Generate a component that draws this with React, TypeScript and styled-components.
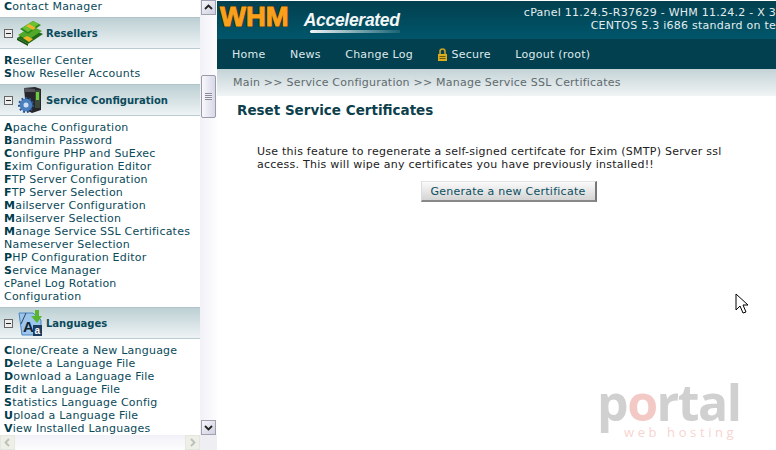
import React from "react";
import styled, { createGlobalStyle } from "styled-components";

const GlobalStyle = createGlobalStyle`
  html, body { margin: 0; padding: 0; background: #fff; overflow: hidden; }
  body { font-family: "DejaVu Sans", Verdana, sans-serif; }
`;

const Page = styled.div`
  position: relative;
  display: flex;
  width: 776px;
  height: 450px;
  overflow: hidden;
  background: #fff;
`;

const Sidebar = styled.aside`
  width: 217px;
  flex: none;
  display: grid;
  grid-template-columns: 200px 17px;
  grid-template-rows: 435px 15px;
  background: #f5f5fa;
`;

const Tree = styled.nav`
  overflow: hidden;
  background: #fff;
`;

const LinkList = styled.div<{ $top: number }>`
  padding: ${(p) => p.$top}px 0 4px 4px;
`;

const LinkItem = styled.a<{ $plain?: boolean }>`
  display: block;
  font-size: 11px;
  line-height: 13px;
  letter-spacing: 0.22px;
  color: #0b4a5a;
  white-space: pre-line;
  &::first-letter {
    font-weight: ${(p) => (p.$plain ? "normal" : "bold")};
    color: #003c4c;
  }
`;

const GroupHeader = styled.div`
  height: 30px;
  display: flex;
  align-items: center;
  border-top: 1px solid #b0c4c9;
  border-bottom: 1px solid #b9ccd1;
  background: linear-gradient(#bdd0d4, #eef3f4);
  padding-left: 4px;
`;

const Toggle = styled.span`
  width: 7px;
  height: 7px;
  border: 1px solid #666;
  background: #eee;
  display: flex;
  align-items: center;
  justify-content: center;
  flex: none;
  &::before {
    content: "";
    width: 5px;
    height: 1px;
    background: #222;
  }
`;

const GroupIcon = styled.svg`
  width: 26px;
  height: 28px;
  margin: 0 3px 0 4px;
  flex: none;
`;

const GroupTitle = styled.span`
  font-size: 10px;
  font-weight: bold;
  color: #0a4a5c;
`;

const ScrollTrack = styled.div`
  display: flex;
  flex-direction: column;
  background: linear-gradient(90deg, #f1f1f8, #fdfdfe);
`;

const HScrollTrack = styled.div`
  display: flex;
  justify-content: space-between;
  background: linear-gradient(#f1f1f8, #fdfdfe);
`;

const ScrollButton = styled.div<{ $muted?: boolean }>`
  width: 15px;
  height: 15px;
  box-sizing: border-box;
  flex: none;
  margin: 0 0 0 ${(p) => (p.$muted ? 0 : 1)}px;
  display: flex;
  align-items: center;
  justify-content: center;
  color: ${(p) => (p.$muted ? "#b8c0b8" : "#222")};
  border: 1px solid ${(p) => (p.$muted ? "#e4e6e0" : "#a0a0b0")};
  background: ${(p) => (p.$muted ? "#eef0e8" : "linear-gradient(135deg, #f6f6fb, #cfd0e0)")};
`;

const ScrollThumb = styled.div`
  width: 15px;
  height: 43px;
  margin: 60px 0 auto 1px;
  box-sizing: border-box;
  border: 1px solid #9a9aa8;
  border-radius: 2px;
  background: linear-gradient(90deg, #f8f8fc, #d8d8e8);
  display: flex;
  align-items: center;
  justify-content: center;
`;

const Grip = styled.span`
  width: 7px;
  height: 7px;
  background: repeating-linear-gradient(#8a8a98 0 1px, #f0f0f6 1px 2px);
`;

const ScrollCorner = styled.div`
  background: #eeeef3;
`;

const Main = styled.main`
  flex: 1;
  min-width: 0;
  display: flex;
  flex-direction: column;
`;

const Banner = styled.header`
  height: 38px;
  margin-top: 1px;
  display: flex;
  justify-content: space-between;
  background: linear-gradient(#02404f, #00566b);
`;

const Logo = styled.div`
  display: flex;
  align-items: baseline;
  padding: 2px 0 0 3px;
`;

const LogoMark = styled.span`
  font-family: "Liberation Sans", Arial, sans-serif;
  font-weight: bold;
  font-size: 27.5px;
  line-height: 28px;
  color: #f9a11b;
  -webkit-text-stroke: 1px #f9a11b;
  text-shadow: 1px 1px 0 #2a2a1c, -1px -1px 0 #2a2a1c, 1px -1px 0 #2a2a1c, -1px 1px 0 #2a2a1c;
`;

const LogoWord = styled.span`
  position: relative;
  font-family: "Liberation Sans", Arial, sans-serif;
  font-style: italic;
  font-weight: bold;
  font-size: 17.5px;
  letter-spacing: -0.3px;
  color: #f2f6f6;
  margin-left: 15px;
  &::after {
    content: "";
    position: absolute;
    left: 6px;
    right: 0;
    bottom: -2px;
    height: 3px;
    border-radius: 2px 0 0 2px;
    background: linear-gradient(90deg, #f2f6f6, rgba(242, 246, 246, 0.1));
  }
`;

const ServerInfo = styled.div`
  font-size: 11px;
  line-height: 13px;
  letter-spacing: 0.25px;
  color: #e3edef;
  text-align: right;
  white-space: nowrap;
  padding-top: 5px;
`;

const NavBar = styled.nav`
  height: 30px;
  display: flex;
  align-items: center;
  gap: 24.5px;
  padding-left: 15px;
  background: #02404f;
`;

const NavLink = styled.a`
  display: flex;
  align-items: center;
  gap: 3px;
  font-size: 11px;
  letter-spacing: 0.25px;
  color: #dfe9eb;
`;

const Breadcrumb = styled.div`
  height: 27px;
  display: flex;
  align-items: center;
  padding-left: 16px;
  font-size: 11px;
  letter-spacing: 0.22px;
  color: #5f6b6e;
  background: linear-gradient(#c4d3d7, #f0f4f5);
`;

const Content = styled.section`
  padding: 6px 20px;
`;

const Title = styled.h1`
  margin: 0;
  font-size: 13.5px;
  line-height: 16px;
  font-weight: bold;
  color: #0d3f4c;
`;

const Notice = styled.p`
  margin: 27px 30px 0 20px;
  font-size: 11px;
  line-height: 13px;
  letter-spacing: 0.25px;
  color: #222;
`;

const ButtonRow = styled.div`
  display: flex;
  justify-content: center;
  margin: 10px 0 0 24px;
`;

const GenerateButton = styled.button`
  width: 176px;
  height: 21px;
  padding: 0;
  border: none;
  border-top: 1px solid #e4e4e4;
  border-left: 1px solid #dcdcdc;
  border-right: 2px solid #777;
  border-bottom: 2px solid #888;
  background: linear-gradient(#fafafa, #d4d4d4);
  font-family: inherit;
  font-size: 11px;
  letter-spacing: 0.25px;
  color: #0b4f61;
`;

const Watermark = styled.div`
  position: absolute;
  left: 597px;
  top: 380px;
  width: 146px;
`;

const WatermarkName = styled.div`
  font-family: "Open Sans", "Liberation Sans", sans-serif;
  font-size: 50px;
  line-height: 44px;
  font-weight: 700;
  letter-spacing: -1.5px;
  color: #d0d0d0;
`;

const WatermarkO = styled.span`
  color: #f3c9c6;
`;

const WatermarkTag = styled.div`
  font-family: "Open Sans", "Liberation Sans", sans-serif;
  font-size: 13px;
  line-height: 16px;
  letter-spacing: 3.6px;
  margin-left: 27px;
  color: #f8d4d0;
`;

const Cursor = styled.svg`
  position: absolute;
  left: 735px;
  top: 293px;
  width: 14px;
  height: 23px;
`;

const Chevron = ({ d }: { d: string }) => (
  <svg width="9" height="9" viewBox="0 0 9 9">
    <path d={d} fill="none" stroke="currentColor" strokeWidth="1.8" />
  </svg>
);

const MoneyIcon = () => (
  <GroupIcon viewBox="0 0 26 28">
    <path d="M0 19l15-9 11 5-15 10z" fill="#1f6a16" />
    <path d="M1 16l14-9 10 5-14 9z" fill="#52a828" />
    <path d="M3 10l13-8 8 4-13 9z" fill="#2e8a1e" />
    <path d="M5 9l11-7 6 3-11 8z" fill="#6cc034" />
    <path d="M9 7l3-2 7 4-3 2zM6 19l4-2 6 3-4 3z" fill="#f0b429" />
    <path d="M0 19l11 6v2L0 21z" fill="#174f10" />
  </GroupIcon>
);

const ServerIcon = () => (
  <GroupIcon viewBox="0 0 26 28">
    <path d="M7 2l11-1 6 2v21l-9 3-6-3z" fill="#26262c" />
    <rect x="18" y="4" width="5" height="18" fill="#3c4a3c" />
    <rect x="19" y="6" width="3" height="8" fill="#6ecb3c" />
    <path d="M7 2l11 1v3H7z" fill="#55555e" />
    <circle cx="9" cy="19" r="6.500" fill="#4a7fc0" />
    <circle cx="9" cy="19" r="7" fill="none" stroke="#2c5690" strokeWidth="2" strokeDasharray="2 2" />
    <circle cx="9" cy="19" r="2.500" fill="#cfe0f5" />
  </GroupIcon>
);

const LanguageIcon = () => (
  <GroupIcon viewBox="0 0 26 28">
    <path d="M2 4h14l8 7v15H5z" fill="#9cc6ec" stroke="#4a86c4" />
    <path d="M4 15L9 4" stroke="#345" strokeWidth="1" />
    <path d="M18 1v6h-4l6 7 5-7h-3V1z" fill="#58b52e" />
    <text x="6" y="23" fontFamily="Liberation Sans" fontWeight="bold" fontSize="15" fill="#123">A</text>
    <rect x="16" y="16" width="9" height="11" fill="#1c3c60" />
    <text x="17.500" y="25" fontFamily="Liberation Sans" fontWeight="bold" fontSize="10" fill="#fff">a</text>
  </GroupIcon>
);

type Group = { title: string; icon: React.ReactNode; top: number; links: { label: string; plain?: boolean }[] };

const groups: Group[] = [
  {
    title: "Resellers",
    icon: <MoneyIcon />,
    top: 5,
    links: [{ label: "Reseller Center" }, { label: "Show Reseller Accounts" }],
  },
  {
    title: "Service Configuration",
    icon: <ServerIcon />,
    top: 5,
    links: [
      { label: "Apache Configuration" },
      { label: "Bandmin Password" },
      { label: "Configure PHP and SuExec" },
      { label: "Exim Configuration Editor" },
      { label: "FTP Server Configuration" },
      { label: "FTP Server Selection" },
      { label: "Mailserver Configuration" },
      { label: "Mailserver Selection" },
      { label: "Manage Service SSL Certificates" },
      { label: "Nameserver Selection", plain: true },
      { label: "PHP Configuration Editor" },
      { label: "Service Manager" },
      { label: "cPanel Log Rotation\nConfiguration", plain: true },
    ],
  },
  {
    title: "Languages",
    icon: <LanguageIcon />,
    top: 5,
    links: [
      { label: "Clone/Create a New Language" },
      { label: "Delete a Language File" },
      { label: "Download a Language File" },
      { label: "Edit a Language File" },
      { label: "Statistics Language Config" },
      { label: "Upload a Language File" },
      { label: "View Installed Languages" },
    ],
  },
];

const navItems = ["Home", "News", "Change Log", "Secure", "Logout (root)"];

export default function App() {
  return (
    <Page>
      <GlobalStyle />
      <Sidebar>
        <Tree>
          <LinkList $top={0}>
            <LinkItem>Contact Manager</LinkItem>
          </LinkList>
          {groups.map((group) => (
            <div key={group.title}>
              <GroupHeader>
                <Toggle />
                {group.icon}
                <GroupTitle>{group.title}</GroupTitle>
              </GroupHeader>
              <LinkList $top={group.top}>
                {group.links.map((link) => (
                  <LinkItem key={link.label} $plain={link.plain}>
                    {link.label}
                  </LinkItem>
                ))}
              </LinkList>
            </div>
          ))}
        </Tree>
        <ScrollTrack>
          <ScrollButton>
            <Chevron d="M1 6l3.500-3.500L8 6" />
          </ScrollButton>
          <ScrollThumb>
            <Grip />
          </ScrollThumb>
          <ScrollButton>
            <Chevron d="M1 3l3.500 3.500L8 3" />
          </ScrollButton>
        </ScrollTrack>
        <HScrollTrack>
          <ScrollButton $muted>
            <Chevron d="M6 1L2.500 4.500 6 8" />
          </ScrollButton>
          <ScrollButton $muted>
            <Chevron d="M3 1l3.500 3.500L3 8" />
          </ScrollButton>
        </HScrollTrack>
        <ScrollCorner />
      </Sidebar>
      <Main>
        <Banner>
          <Logo>
            <LogoMark>WHM</LogoMark>
            <LogoWord>Accelerated</LogoWord>
          </Logo>
          <ServerInfo>
            cPanel 11.24.5-R37629 - WHM 11.24.2 - X 3
            <br />
            CENTOS 5.3 i686 standard on te
          </ServerInfo>
        </Banner>
        <NavBar>
          {navItems.map((item) => (
            <NavLink key={item}>
              {item === "Secure" && (
                <svg width="11" height="13" viewBox="0 0 11 13">
                  <path d="M3 6V3.500a2.500 2.500 0 0 1 5 0V6" fill="none" stroke="#c9a227" strokeWidth="1.600" />
                  <path d="M1 6h9v7H1z" fill="#d9ae1e" />
                  <path d="M2.500 8.500h6M2.500 10.500h6" stroke="#6b5710" />
                </svg>
              )}
              {item}
            </NavLink>
          ))}
        </NavBar>
        <Breadcrumb>Main &gt;&gt; Service Configuration &gt;&gt; Manage Service SSL Certificates</Breadcrumb>
        <Content>
          <Title>Reset Service Certificates</Title>
          <Notice>
            Use this feature to regenerate a self-signed certifcate for Exim (SMTP) Server ssl access. This will wipe
            any certificates you have previously installed!!
          </Notice>
          <ButtonRow>
            <GenerateButton>Generate a new Certificate</GenerateButton>
          </ButtonRow>
        </Content>
      </Main>
      <Cursor viewBox="0 0 14 23">
        <path d="M1 1v16l4-4 3 7 3-1-3-7h5z" fill="#fff" stroke="#000" strokeWidth="1" />
      </Cursor>
      <Watermark>
        <WatermarkName>
          p<WatermarkO>o</WatermarkO>rtal
        </WatermarkName>
        <WatermarkTag>web hosting</WatermarkTag>
      </Watermark>
    </Page>
  );
}
